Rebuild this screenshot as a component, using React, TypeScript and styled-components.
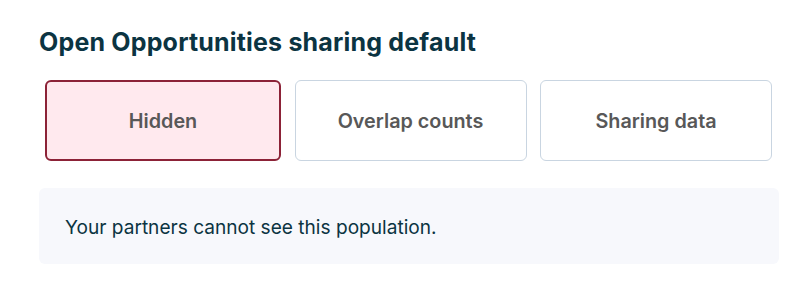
import React, { useState } from "react";
import styled, { createGlobalStyle } from "styled-components";

const GlobalStyle = createGlobalStyle`
  body {
    margin: 0;
    background: #ffffff;
    font-family: Inter, "Noto Sans", sans-serif;
  }
`;

const Section = styled.section`
  padding: 26px 24px 0 39px;
  width: 740px;
`;

const Title = styled.h2`
  margin: 0;
  font-size: 25px;
  font-weight: 700;
  line-height: 32px;
  letter-spacing: 0.18px;
  color: #0b3442;
`;

const Options = styled.div`
  display: grid;
  grid-template-columns: 236px 232px 232px;
  column-gap: 13.5px;
  padding: 0 0 0 6px;
  margin-top: 22px;
`;

const Option = styled.button<{ $active: boolean }>`
  height: 81px;
  border-radius: 6px;
  box-sizing: border-box;
  border: ${(p) => (p.$active ? "2px solid #8c2237" : "1px solid #c9d5e1")};
  background: ${(p) => (p.$active ? "#ffe9ee" : "#ffffff")};
  font-family: Inter, sans-serif;
  font-size: 19.8px;
  font-weight: 600;
  color: #585858;
  cursor: pointer;
`;

const Note = styled.div`
  margin-top: 27px;
  background: #f7f8fc;
  border-radius: 6px;
  height: 76px;
  display: flex;
  align-items: center;
  padding: 0 26px;
  font-size: 19.1px;
  padding-top: 2px;
  box-sizing: border-box;
  color: #0b3442;
`;

const options = ["Hidden", "Overlap counts", "Sharing data"];

export default function App() {
  const [selected, setSelected] = useState("Hidden");
  return (
    <>
      <GlobalStyle />
      <Section>
        <Title>Open Opportunities sharing default</Title>
        <Options>
          {options.map((o) => (
            <Option key={o} $active={o === selected} onClick={() => setSelected(o)}>
              {o}
            </Option>
          ))}
        </Options>
        <Note>Your partners cannot see this population.</Note>
      </Section>
    </>
  );
}
